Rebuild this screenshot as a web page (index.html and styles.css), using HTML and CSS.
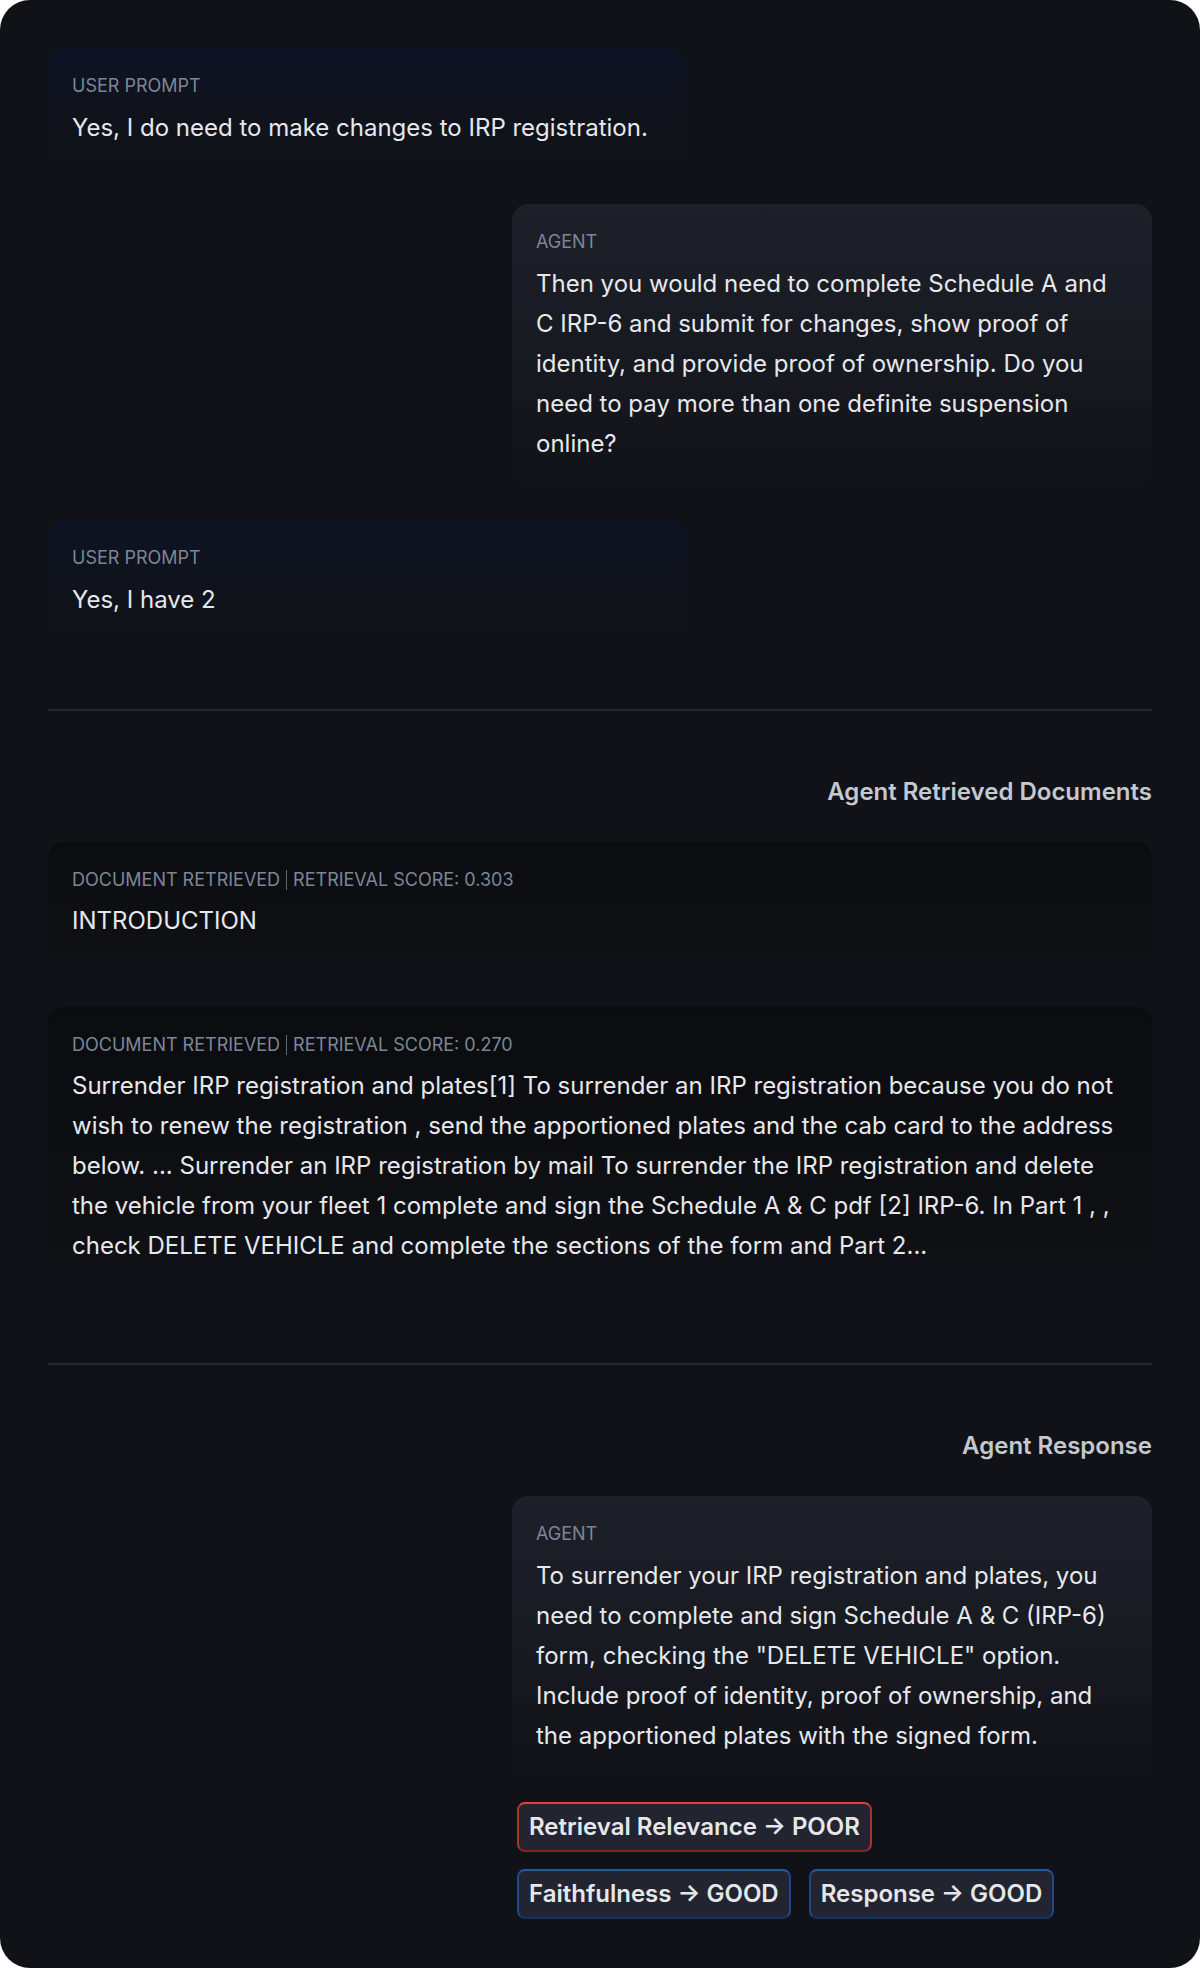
FILE: index.html
```html
<!DOCTYPE html>
<html lang="en">
<head>
<meta charset="utf-8">
<title>Agent Evaluation</title>
<link rel="stylesheet" href="styles.css">
</head>
<body>
<main class="page">
  <section class="chat">
    <div class="msg msg-user">
      <div class="msg-label">USER PROMPT</div>
      <p class="msg-text">Yes, I do need to make changes to IRP registration.</p>
    </div>
    <div class="msg msg-agent">
      <div class="msg-label">AGENT</div>
      <p class="msg-text">Then you would need to complete Schedule A and C IRP-6 and submit for changes, show proof of identity, and provide proof of ownership. Do you need to pay more than one definite suspension online?</p>
    </div>
    <div class="msg msg-user">
      <div class="msg-label">USER PROMPT</div>
      <p class="msg-text">Yes, I have 2</p>
    </div>
  </section>

  <hr class="divider">

  <h2 class="section-title">Agent Retrieved Documents</h2>
  <section class="docs">
    <div class="msg msg-doc">
      <div class="msg-label">DOCUMENT RETRIEVED<span class="sep"></span>RETRIEVAL SCORE: 0.303</div>
      <p class="msg-text">INTRODUCTION</p>
    </div>
    <div class="msg msg-doc">
      <div class="msg-label">DOCUMENT RETRIEVED<span class="sep"></span>RETRIEVAL SCORE: 0.270</div>
      <p class="msg-text">Surrender IRP registration and plates[1] To surrender an IRP registration because you do not wish to renew the registration , send the apportioned plates and the cab card to the address below. ... Surrender an IRP registration by mail To surrender the IRP registration and delete the vehicle from your fleet 1 complete and sign the Schedule A &amp; C pdf [2] IRP-6. In Part 1 , , check DELETE VEHICLE and complete the sections of the form and Part 2...</p>
    </div>
  </section>

  <hr class="divider divider-tight">

  <h2 class="section-title">Agent Response</h2>
  <section class="response">
    <div class="msg msg-agent">
      <div class="msg-label">AGENT</div>
      <p class="msg-text">To surrender your IRP registration and plates, you need to complete and sign Schedule A &amp; C (IRP-6) form, checking the "DELETE VEHICLE" option. Include proof of identity, proof of ownership, and the apportioned plates with the signed form.</p>
    </div>
    <div class="badges">
      <div class="badge-row">
        <span class="badge badge-poor">Retrieval Relevance → POOR</span>
      </div>
      <div class="badge-row">
        <span class="badge badge-good">Faithfulness → GOOD</span>
        <span class="badge badge-good">Response → GOOD</span>
      </div>
    </div>
  </section>
</main>
</body>
</html>
```

FILE: styles.css
```css
* { box-sizing: border-box; }

html, body {
  margin: 0;
  padding: 0;
  background: #ffffff;
}

body {
  font-family: Inter, "Noto Sans", "Liberation Sans", sans-serif;
  color: #e4e7ec;
}

.page {
  width: 1200px;
  min-height: 1968px;
  background: #111217;
  border-radius: 30px;
  padding: 48px 48px 48px 48px;
  display: flex;
  flex-direction: column;
}

.chat {
  display: flex;
  flex-direction: column;
  gap: 32px;
}

.msg {
  border-radius: 16px;
  padding: 24px 24px 24px 24px;
}

.msg-label {
  font-size: 18px;
  line-height: 28px;
  color: #7c8698;
  display: flex;
  align-items: center;
}

.sep {
  display: inline-block;
  width: 1px;
  height: 20px;
  background: #5f6878;
  margin: 0 6px;
}

.msg-text {
  margin: 8px 0 0;
  font-size: 24px;
  line-height: 40px;
  color: #e6e8ed;
}

.msg-user {
  width: 638px;
  align-self: flex-start;
  background: linear-gradient(180deg, #0d1324 0%, #10131b 60%, #111217 100%);
}

.msg-agent {
  width: 640px;
  align-self: flex-end;
  background: linear-gradient(180deg, #1d2029 0%, #171920 60%, #111217 100%);
}

.msg-doc {
  background: linear-gradient(180deg, #0b0c0f 0%, #0e0f13 60%, #111217 100%);
  padding-bottom: 36px;
}

.msg-doc .msg-text {
  margin-top: 7px;
}

.divider {
  border: 0;
  height: 2px;
  background: #26282e;
  margin: 65px 0 0;
}

.divider-tight {
  margin-top: 61px;
}

.section-title {
  margin: 65px 0 34px;
  text-align: right;
  font-size: 24px;
  line-height: 32px;
  font-weight: 600;
  color: #c3c8d1;
}

.docs {
  display: flex;
  flex-direction: column;
  gap: 30px;
}

.response {
  display: flex;
  flex-direction: column;
  align-items: flex-end;
}

.badges {
  width: 640px;
  padding-left: 5px;
  margin-top: 22px;
  display: flex;
  flex-direction: column;
  gap: 17px;
}

.badge-row {
  display: flex;
  gap: 18px;
}

.badge {
  display: inline-block;
  height: 50px;
  padding: 8px 10px;
  border: 2px solid;
  border-radius: 8px;
  background: #222530;
  font-size: 24px;
  line-height: 30px;
  font-weight: 600;
  color: #e5e7eb;
  white-space: nowrap;
}

.badge-poor {
  border-color: #d6443a #a8342c #7f2722 #a8342c;
}

.badge-good {
  border-color: #2757a6 #204888 #17325f #204888;
}
```
